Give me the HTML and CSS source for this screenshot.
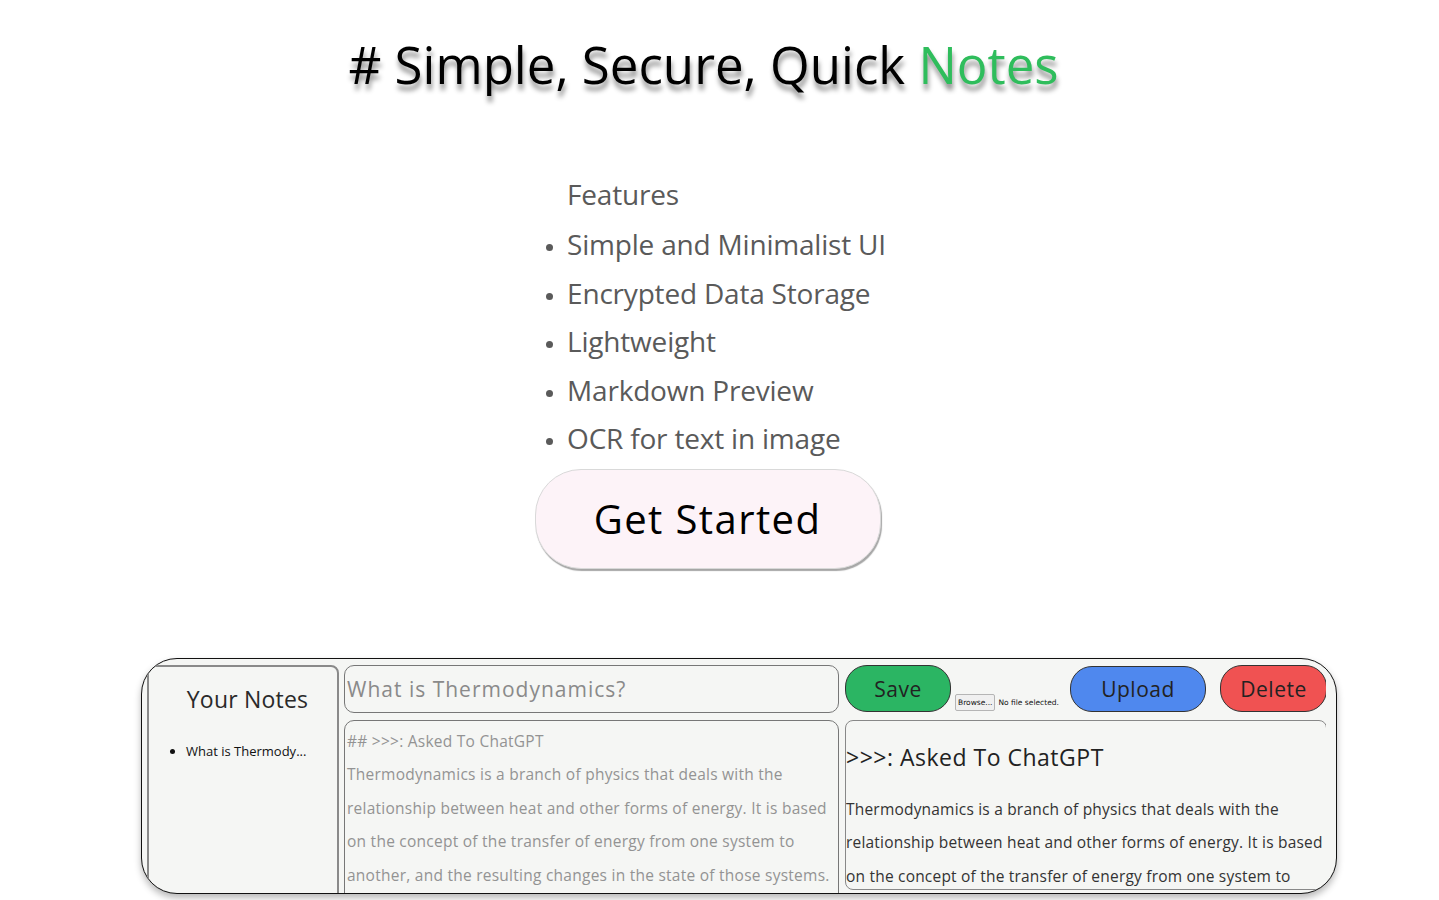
FILE: index.html
```html
<!DOCTYPE html>
<html lang="en">
<head>
<meta charset="utf-8">
<title>Simple, Secure, Quick Notes</title>
<link rel="stylesheet" href="styles.css">
</head>
<body>
<main class="page">
  <section class="hero">
    <h1 class="title"># Simple, Secure, Quick <span class="accent">Notes</span></h1>
    <div class="features">
      <ul class="feature-list">
        <li class="feature-head">Features</li>
        <li>Simple and Minimalist UI</li>
        <li>Encrypted Data Storage</li>
        <li>Lightweight</li>
        <li>Markdown Preview</li>
        <li>OCR for text in image</li>
      </ul>
    </div>
    <button class="start-btn">Get Started</button>
  </section>

  <section class="app">
    <aside class="sidebar">
      <h2 class="side-title">Your Notes</h2>
      <ul class="note-list">
        <li>What is Thermody...</li>
      </ul>
    </aside>
    <div class="workspace">
      <input class="note-title" type="text" value="What is Thermodynamics?">
      <div class="toolbar">
        <button class="btn btn-save">Save</button>
        <div class="file-pick">
          <span class="browse">Browse...</span>
          <span class="file-status">No file selected.</span>
        </div>
        <button class="btn btn-upload">Upload</button>
        <button class="btn btn-delete">Delete</button>
      </div>
      <textarea class="editor" wrap="off" spellcheck="false">## &gt;&gt;&gt;: Asked To ChatGPT
Thermodynamics is a branch of physics that deals with the
relationship between heat and other forms of energy. It is based
on the concept of the transfer of energy from one system to
another, and the resulting changes in the state of those systems.
The laws of thermodynamics describe how energy moves.</textarea>
      <div class="preview">
        <h3 class="preview-title">&gt;&gt;&gt;: Asked To ChatGPT</h3>
        <p class="preview-text">Thermodynamics is a branch of physics that deals with the<br>relationship between heat and other forms of energy. It is based<br>on the concept of the transfer of energy from one system to<br>another, and the resulting changes in the state of those systems.</p>
      </div>
    </div>
  </section>
</main>
</body>
</html>
```

FILE: styles.css
```css
* {
  box-sizing: border-box;
}

html, body {
  margin: 0;
  padding: 0;
  background: #ffffff;
  overflow: hidden;
}

body {
  font-family: "Open Sans", "Liberation Sans", sans-serif;
  color: #000;
}

.page {
  width: 1415px;
  height: 900px;
}

.hero {
  display: flex;
  flex-direction: column;
  align-items: center;
}

.title {
  margin: 33px 0 0 0;
  font-size: 51px;
  line-height: 63px;
  font-weight: 400;
  letter-spacing: 0;
  color: #000;
  text-shadow: 1px 6px 5px rgba(0, 0, 0, 0.45);
  padding-right: 8px;
}

.accent {
  color: #2fbd5c;
}

.features {
  margin-top: 74px;
  display: flex;
  justify-content: center;
  padding-left: 15px;
}

.feature-list {
  margin: 0;
  padding-left: 23px;
  font-size: 28px;
  line-height: 48.5px;
  color: #5a5a5a;
  letter-spacing: -0.2px;
}

.feature-list li::marker {
  font-size: 20px;
}

.feature-head {
  list-style: none;
  margin-bottom: 1.5px;
}

.start-btn {
  margin-top: 6px;
  width: 346px;
  height: 100px;
  border-radius: 46px;
  border: 1px solid #d9d9d9;
  background: #fdf3f8;
  box-shadow: 1px 2px 1px rgba(0, 0, 0, 0.35);
  font-family: inherit;
  font-size: 40px;
  letter-spacing: 1.4px;
  color: #000;
  padding: 0;
}

.app {
  margin: 89px 0 0 141px;
  width: 1196px;
  height: 236px;
  border: 1px solid #111;
  border-radius: 36px;
  background: #f5f6f4;
  box-shadow: 0 4px 7px rgba(0, 0, 0, 0.28);
  overflow: hidden;
  display: flex;
  padding: 6px 10px 0 5px;
}

.sidebar {
  width: 192px;
  height: 320px;
  flex: none;
  border: 2px solid #8a8a8a;
  border-radius: 8px;
  text-align: center;
}

.side-title {
  margin: 17px 0 0 0;
  padding-left: 9px;
  font-size: 23px;
  line-height: 30px;
  font-weight: 400;
  letter-spacing: 0.2px;
  color: #2a2a2a;
}

.note-list {
  margin: 28px 0 0 0;
  padding-left: 37px;
  text-align: left;
  font-size: 13px;
  line-height: 18px;
  color: #111;
}

.workspace {
  margin-left: 5px;
  display: grid;
  grid-template-columns: 495px 482px;
  grid-template-rows: 48px 1fr;
  column-gap: 6px;
  row-gap: 7px;
  overflow: hidden;
}

.note-title {
  width: 495px;
  height: 48px;
  margin: 0;
  border: 1px solid #777;
  border-radius: 10px;
  background: #f5f6f4;
  font-family: inherit;
  font-size: 21px;
  letter-spacing: 1px;
  color: #8a8a8a;
  padding: 0 2px;
}

.toolbar {
  display: flex;
  align-items: center;
  padding-left: 0;
}

.btn {
  height: 47px;
  border: 1px solid #333;
  border-radius: 22px;
  font-family: inherit;
  font-size: 21px;
  letter-spacing: 0.5px;
  color: #222;
  padding: 0;
}

.btn-save {
  width: 106px;
  background: #2bb563;
}

.btn-upload {
  width: 136px;
  height: 46px;
  margin-left: 8px;
  margin-top: 1px;
  background: #4f88ee;
}

.btn-delete {
  width: 107px;
  margin-left: 14px;
  background: #f05252;
}

.file-pick {
  width: 107px;
  display: flex;
  align-items: center;
  align-self: flex-end;
  margin: 0 0 2px 4px;
  gap: 3px;
  font-family: "DejaVu Sans", sans-serif;
  font-size: 7.5px;
  color: #111;
  white-space: nowrap;
}

.browse {
  border: 1px solid #b5b5b5;
  border-radius: 2px;
  background: #f0f0f0;
  padding: 3px 2px;
}

.editor {
  width: 495px;
  height: 200px;
  margin: 0;
  border: 1px solid #777;
  border-radius: 10px;
  background: #f5f6f4;
  font-family: inherit;
  font-size: 15.5px;
  line-height: 33.5px;
  letter-spacing: 0.25px;
  color: #939393;
  padding: 4px 2px;
  resize: none;
  overflow: hidden;
}

.preview {
  width: 482px;
  height: 170px;
  border: 1px solid #888;
  border-radius: 8px;
  padding: 0;
  color: #2e2e2e;
  overflow: hidden;
}

.preview-title {
  margin: 18px 0 0 0;
  font-size: 23px;
  line-height: 36px;
  font-weight: 400;
  letter-spacing: 0.5px;
  color: #222;
}

.preview-text {
  margin: 18px 0 0 0;
  font-size: 15.5px;
  line-height: 33.5px;
  letter-spacing: 0.2px;
  color: #333;
}
```
